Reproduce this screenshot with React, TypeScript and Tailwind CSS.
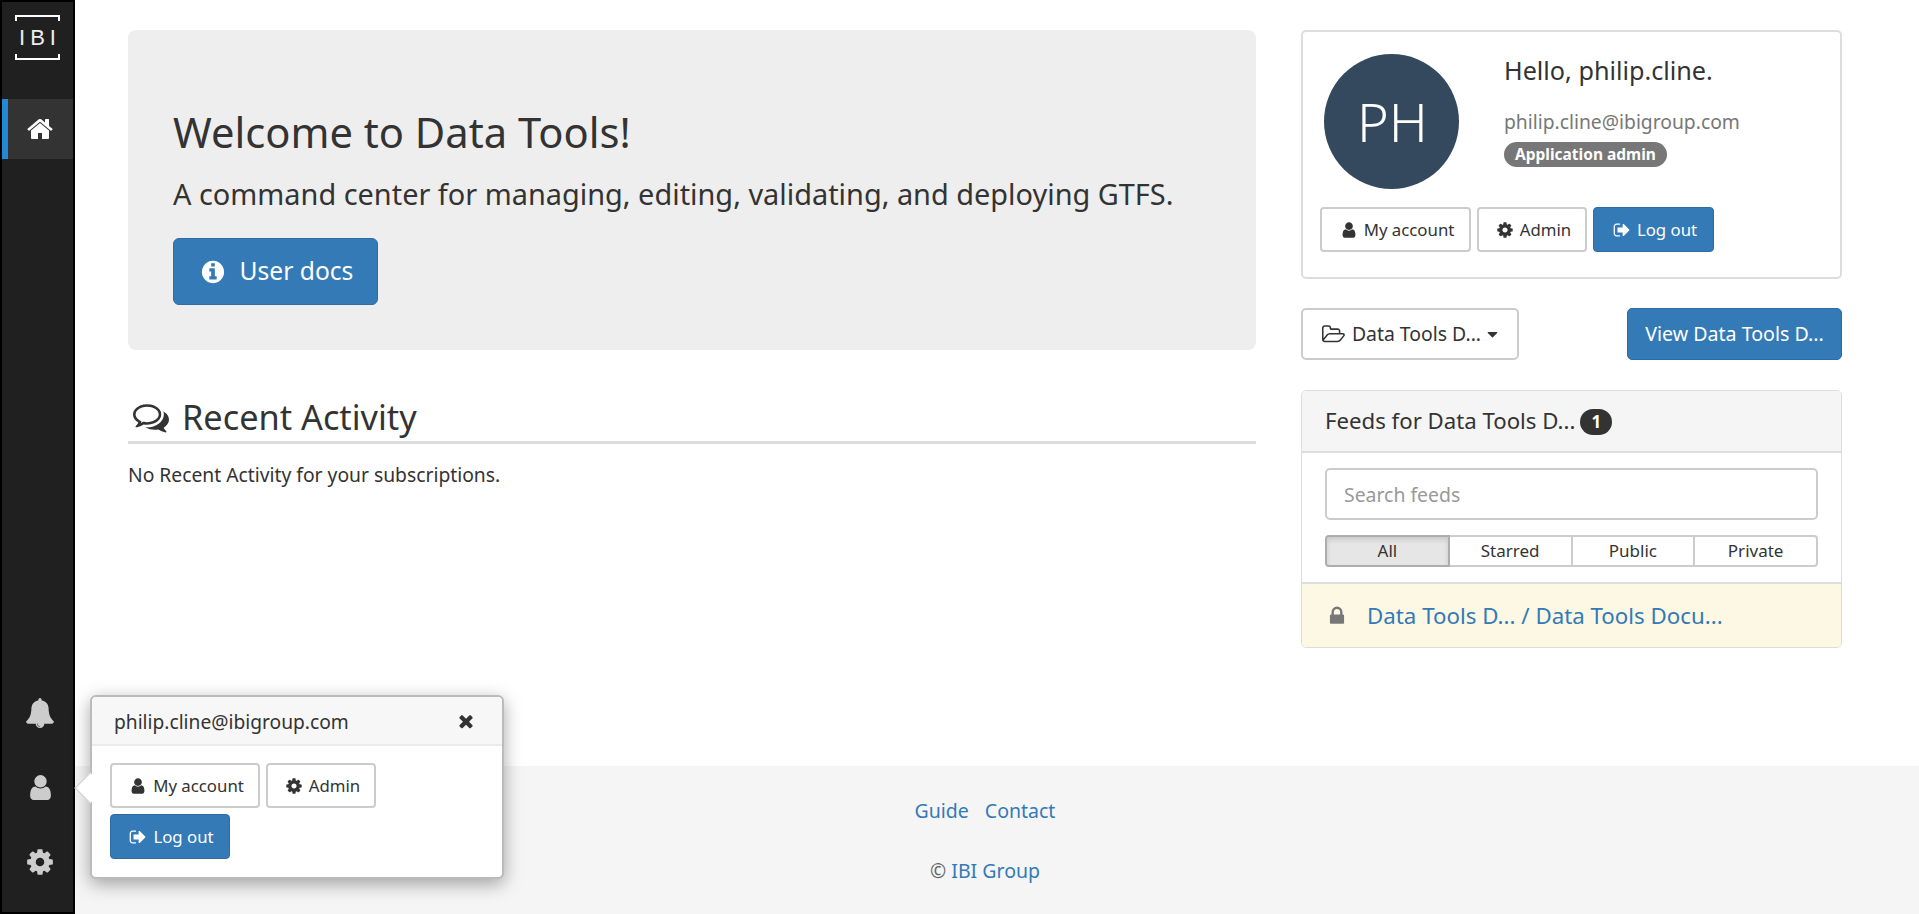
import type { ReactNode } from "react";

const FONT = "font-['Noto_Sans','Liberation_Sans',sans-serif]";

const paths = {
  home: "M1472 992v480q0 26-19 45t-45 19h-384v-384h-256v384h-384q-26 0-45-19t-19-45v-480q0-1 .5-3t.5-3l575-474 575 474q1 2 1 6zm223-69l-62 74q-8 9-21 11h-3q-13 0-21-7l-692-577-692 577q-12 8-24 7-13-2-21-11l-62-74q-8-10-7-23.5t11-21.5l719-599q32-26 76-26t76 26l244 204v-195q0-14 9-23t23-9h192q14 0 23 9t9 23v408l219 182q10 8 11 21.5t-7 23.5z",
  bell: "M912 1696q0-16-16-16-59 0-101.5-42.5t-42.5-101.5q0-16-16-16t-16 16q0 73 51.5 124.5t124.5 51.5q16 0 16-16zm816-288q0 52-38 90t-90 38h-448q0 106-75 181t-181 75-181-75-75-181h-448q-52 0-90-38t-38-90q50-42 91-88t85-119.5 74.5-158.5 50-206 19.5-260q0-152 117-282.5t307-158.5q-8-19-8-39 0-40 28-68t68-28 68 28 28 68q0 20-8 39 190 28 307 158.5t117 282.5q0 139 19.5 260t50 206 74.5 158.5 85 119.5 91 88z",
  user: "M1536 1399q0 109-62.5 187t-150.5 78h-854q-88 0-150.5-78t-62.5-187q0-85 8.5-160.5t31.5-152 58.5-131 94-89 134.5-34.5q131 128 313 128t313-128q76 0 134.5 34.5t94 89 58.5 131 31.5 152 8.5 160.5zm-256-887q0 159-112.5 271.5t-271.5 112.5-271.5-112.5-112.5-271.5 112.5-271.5 271.5-112.5 271.5 112.5 112.5 271.5z",
  cog: "M1152 896q0-106-75-181t-181-75-181 75-75 181 75 181 181 75 181-75 75-181zm512-109v222q0 12-8 23t-20 13l-185 28q-19 54-39 91 35 50 107 138 10 12 10 25t-9 23q-27 37-99 108t-94 71q-12 0-26-9l-138-108q-44 23-91 38-16 136-29 186-7 28-36 28h-222q-14 0-24.5-8.5t-11.5-21.5l-28-184q-49-16-90-37l-141 107q-10 9-25 9-14 0-25-11-126-114-165-168-7-10-7-23 0-12 8-23 15-21 51-66.5t54-70.5q-27-50-41-99l-183-27q-13-2-21-12.5t-8-23.5v-222q0-12 8-23t19-13l186-28q14-46 39-92-40-57-107-138-10-12-10-24 0-10 9-23 26-36 98.5-107.5t94.5-71.5q13 0 26 10l138 107q44-23 91-38 16-136 29-186 7-28 36-28h222q14 0 24.5 8.5t11.5 21.5l28 184q49 16 90 37l142-107q9-9 24-9 13 0 25 10 129 119 165 170 7 8 7 22 0 12-8 23-15 21-51 66.5t-54 70.5q26 50 41 98l183 28q13 2 21 12.5t8 23.5z",
  signOut: "M704 1440q0 4 1 20t.5 26.5-3 23.5-10 19.5-20.5 6.5h-320q-119 0-203.5-84.5t-84.5-203.5v-704q0-119 84.5-203.5t203.5-84.5h320q13 0 22.5 9.5t9.5 22.5q0 4 1 20t.5 26.5-3 23.5-10 19.5-20.5 6.5h-320q-66 0-113 47t-47 113v704q0 66 47 113t113 47h312l11.5 1 11.5 3 8 5.5 7 9 2 13.5zm928-544q0 26-19 45l-544 544q-19 19-45 19t-45-19-19-45v-288h-448q-26 0-45-19t-19-45v-384q0-26 19-45t45-19h448v-288q0-26 19-45t45-19 45 19l544 544q19 19 19 45z",
  info: "M1152 1376v-160q0-14-9-23t-23-9h-96v-512q0-14-9-23t-23-9h-320q-14 0-23 9t-9 23v160q0 14 9 23t23 9h96v320h-96q-14 0-23 9t-9 23v160q0 14 9 23t23 9h448q14 0 23-9t9-23zm-128-896v-160q0-14-9-23t-23-9h-192q-14 0-23 9t-9 23v160q0 14 9 23t23 9h192q14 0 23-9t9-23zm640 416q0 209-103 385.5t-279.5 279.5-385.5 103-385.5-103-279.5-279.5-103-385.5 103-385.5 279.5-279.5 385.5-103 385.5 103 279.5 279.5 103 385.5z",
  times: "M1490 1322q0 40-28 68l-136 136q-28 28-68 28t-68-28l-294-294-294 294q-28 28-68 28t-68-28l-136-136q-28-28-28-68t28-68l294-294-294-294q-28-28-28-68t28-68l136-136q28-28 68-28t68 28l294 294 294-294q28-28 68-28t68 28l136 136q28 28 28 68t-28 68l-294 294 294 294q28 28 28 68z",
  lock: "M640 768h512v-192q0-106-75-181t-181-75-181 75-75 181v192zm832 96v576q0 40-28 68t-68 28h-960q-40 0-68-28t-28-68v-576q0-40 28-68t68-28h32v-192q0-184 132-316t316-132 316 132 132 316v192h32q40 0 68 28t28 68z",
  folder: "M1781 931q0-35-53-35h-1088q-40 0-85.5 21.5t-71.5 52.5l-294 363q-18 24-18 40 0 35 53 35h1088q40 0 86-22t71-53l294-363q18-22 18-39zm-1141-163h768v-160q0-40-28-68t-68-28h-576q-40 0-68-28t-28-68v-64q0-40-28-68t-68-28h-320q-40 0-68 28t-28 68v853l256-315q44-53 116-87.5t140-34.5zm1269 163q0 62-46 120l-295 363q-43 53-116 87.5t-140 34.5h-1088q-92 0-158-66t-66-158v-960q0-92 66-158t158-66h320q92 0 158 66t66 158v32h544q92 0 158 66t66 158v160h192q54 0 99 24.5t67 70.5q15 32 15 68z",
  comments: "M704 384q-153 0-286 52t-211.5 141-78.5 191q0 82 53 158t149 132l97 56-35 84q34-20 62-39l44-31 53 10q78 14 153 14 153 0 286-52t211.5-141 78.5-191-78.5-191-211.5-141-286-52zm0-128q191 0 353.5 68.5t256.5 186.5 94 257-94 257-256.5 186.5-353.5 68.5q-86 0-176-16-124 88-278 128-36 9-86 16h-3q-11 0-20.5-8t-11.5-21q-1-3-1-6.5t.5-6.5 2-6l2.5-5 3.5-5.5 4-5 4.5-5 4-4.5q5-6 23-25t26-29.5 22.5-29 25-38.5 20.5-44q-124-72-195-177t-71-224q0-139 94-257t256.5-186.5 353.5-68.5zm822 1169q10 24 20.5 44t25 38.5 22.5 29 26 29.5 23 25q1 1 4 4.5t4.5 5 4 5 3.5 5.5l2.5 5 2 6 .5 6.5-1 6.5q-3 14-13 22t-22 7q-50-7-86-16-154-40-278-128-90 16-176 16-271 0-472-132 58 4 88 4 161 0 309-45t264-129q125-92 192-212t67-254q0-77-23-152 129 71 204 178t75 230q0 120-71 224.5t-195 176.5z",
  caret: "M1408 704q0 26-19 45l-448 448q-19 19-45 19t-45-19l-448-448q-19-19-19-45t19-45 45-19h896q26 0 45 19t19 45z",
};

function Icon({ name, size, className = "" }: { name: keyof typeof paths; size: number; className?: string }) {
  return (
    <svg viewBox={name === "folder" ? "0 0 1920 1792" : "0 0 1792 1792"} width={size} height={size} fill="currentColor" className={`shrink-0 ${className}`}>
      <path d={paths[name]} />
    </svg>
  );
}

function SmallButton({ icon, primary, width, children }: { icon: keyof typeof paths; primary?: boolean; width: string; children: ReactNode }) {
  return (
    <button
      className={`flex h-[45px] items-center justify-center gap-[6px] rounded-[4px] pl-[3px] text-[16.8px] ${width} ${
        primary ? "border border-[#2e6da4] bg-[#337ab7] text-white" : "border-2 border-[#ccc] bg-white text-[#333]"
      }`}
    >
      <Icon name={icon} size={18} />
      {children}
    </button>
  );
}

function AccountButtons({ wrap }: { wrap?: boolean }) {
  return (
    <div className={`flex gap-[6px] ${wrap ? "w-[300px] flex-wrap" : ""}`}>
      <SmallButton icon="user" width={wrap ? "w-[150px]" : "w-[151px]"}>My account</SmallButton>
      <SmallButton icon="cog" width="w-[110px]">Admin</SmallButton>
      <SmallButton icon="signOut" primary width={wrap ? "w-[120px]" : "w-[121px]"}>Log out</SmallButton>
    </div>
  );
}

function Sidebar() {
  return (
    <aside className="flex h-screen w-[75px] shrink-0 flex-col justify-between border-2 border-black bg-[#202020] pb-[35px] text-[#ccc]">
      <div>
        <div className="flex h-[59px] items-start justify-center pt-[13px]">
          <div className="relative flex h-[45px] w-[45px] items-center justify-center font-['Liberation_Sans',sans-serif] text-[22px] tracking-[5px] text-[#eee]">
            <span className="absolute left-0 top-0 h-[6px] w-full border-x-2 border-t-2 border-white" />
            <span className="absolute bottom-0 left-0 h-[6px] w-full border-x-2 border-b-2 border-white" />
            <span className="pl-[5px]">IBI</span>
          </div>
        </div>
        <div className="mt-[38px] flex h-[60px] items-center justify-center border-l-[6px] border-[#2389d0] bg-[#333] pr-[1px] text-white">
          <Icon name="home" size={28} />
        </div>
      </div>
      <div className="flex flex-col items-center gap-[45px] pl-[5px]">
        <Icon name="bell" size={30} />
        <Icon name="user" size={29} />
        <Icon name="cog" size={30} />
      </div>
    </aside>
  );
}

function UserPopover() {
  return (
    <div className="absolute left-[90px] top-[695px] w-[414px] rounded-[6px] border-2 border-[#bbb] bg-white shadow-[0_5px_18px_rgba(0,0,0,0.35)]">
      <span className="absolute left-[-13px] top-[80px] h-[22px] w-[22px] rotate-45 border-b border-l border-[#ccc] bg-white" />
      <div className="relative flex h-[49px] items-center justify-between rounded-t-[6px] border-b-2 border-[#ebebeb] bg-[#f7f7f7] pl-[22px] pr-[26px] text-[19.2px] text-[#333]">
        <span className="pt-[3px]">philip.cline@ibigroup.com</span>
        <Icon name="times" size={20} />
      </div>
      <div className="relative px-[18px] pb-[18px] pt-[17px]">
        <AccountButtons wrap />
      </div>
    </div>
  );
}

export default function App() {
  return (
    <div className={`relative flex h-screen overflow-hidden bg-white text-[#333] ${FONT}`}>
      <Sidebar />
      <main className="flex min-w-0 flex-1 flex-col">
        <div className="flex flex-1 gap-[45px] pl-[53px] pt-[30px]">
          <section className="w-[1128px] shrink-0">
            <div className="h-[320px] rounded-[8px] bg-[#eee] px-[45px] pt-[75px]">
              <h1 className="text-[41.7px] leading-[54px]">Welcome to Data Tools!</h1>
              <p className="mt-[16px] text-[28.9px] leading-[38px]">A command center for managing, editing, validating, and deploying GTFS.</p>
              <button className="mt-[25px] flex h-[67px] w-[205px] items-center justify-center gap-[14px] rounded-[6px] border border-[#2e6da4] bg-[#337ab7] pl-[2px] text-[24.6px] text-white">
                <Icon name="info" size={26} />
                User docs
              </button>
            </div>
            <h2 className="mt-[46px] flex h-[48px] items-center gap-[13px] border-b-[3px] border-[#ddd] pb-1 pl-[5px] text-[34.3px]">
              <Icon name="comments" size={36} />
              Recent Activity
            </h2>
            <p className="mt-[18px] text-[19.3px] leading-[26px]">No Recent Activity for your subscriptions.</p>
          </section>

          <section className="w-[541px] shrink-0">
            <div className="h-[249px] rounded-[5px] border-2 border-[#ddd] px-[17px] pt-[22px]">
              <div className="flex h-[133px] pl-[4px]">
                <div className="flex h-[135px] w-[135px] items-center justify-center rounded-full bg-[#34495e] pl-[2px] text-[54px] font-light text-white">PH</div>
                <div className="pl-[45px]">
                  <div className="-mt-[1px] text-[25.2px] leading-[34px]">Hello, philip.cline.</div>
                  <div className="mt-[22px] text-[19.3px] leading-[26px] text-[#777]">philip.cline@ibigroup.com</div>
                  <span className="mt-[7px] inline-block h-[25px] rounded-full bg-[#777] px-[11px] text-[15.5px] font-bold leading-[25px] text-white">Application admin</span>
                </div>
              </div>
              <div className="mt-[20px]">
                <AccountButtons />
              </div>
            </div>

            <div className="mt-[29px] flex justify-between">
              <button className="flex h-[52px] w-[218px] items-center justify-center rounded-[5px] border-2 border-[#ccc] bg-white pl-[3px] text-[19.4px]">
                <Icon name="folder" size={23} className="mr-[7px]" />
                Data Tools D...
                <Icon name="caret" size={17} className="ml-[3px]" />
              </button>
              <button className="h-[52px] w-[215px] rounded-[5px] border border-[#2e6da4] bg-[#337ab7] text-[19.6px] text-white">View Data Tools D...</button>
            </div>

            <div className="mt-[30px] overflow-hidden rounded-[5px] border border-[#ddd]">
              <div className="flex h-[62px] items-center gap-[5px] border-b-2 border-[#ddd] bg-[#f5f5f5] px-[23px] text-[22.2px]">
                Feeds for Data Tools D...
                <span className="mt-[2px] flex h-[26px] w-[32px] items-center justify-center rounded-full bg-[#333] text-[17px] font-bold text-white">1</span>
              </div>
              <div className="px-[23px] pb-[15px] pt-[15px]">
                <input
                  placeholder="Search feeds"
                  className="h-[52px] w-full rounded-[5px] border-2 border-[#ccc] px-[17px] text-[19.4px] outline-none placeholder:text-[#999]"
                />
                <div className="mt-[15px] flex h-[32px] text-[17px]">
                  <div className="flex flex-1 items-center justify-center rounded-l-[4px] border-2 border-[#adadad] bg-[#e6e6e6] shadow-[inset_0_3px_5px_rgba(0,0,0,0.125)]">All</div>
                  <div className="flex flex-1 items-center justify-center border-2 border-l-0 border-[#ccc]">Starred</div>
                  <div className="flex flex-1 items-center justify-center border-2 border-l-0 border-[#ccc]">Public</div>
                  <div className="flex flex-1 items-center justify-center rounded-r-[4px] border-2 border-l-0 border-[#ccc]">Private</div>
                </div>
              </div>
              <div className="flex h-[65px] items-center gap-[19px] border-t-2 border-[#ddd] bg-[#fcf8e3] pl-[24px] text-[22.3px] text-[#337ab7]">
                <Icon name="lock" size={22} className="text-[#777]" />
                Data Tools D... / Data Tools Docu...
              </div>
            </div>
          </section>
        </div>

        <footer className="flex h-[148px] shrink-0 flex-col items-center bg-[#f5f5f5] pr-[24px] pt-[32px] text-[19.5px] text-[#337ab7]">
          <div className="flex gap-[16px] leading-[26px]">
            <span>Guide</span>
            <span>Contact</span>
          </div>
          <div className="mt-[34px] leading-[26px]">
            <span className="text-[#666]">©</span> IBI Group
          </div>
        </footer>
      </main>
      <UserPopover />
    </div>
  );
}
